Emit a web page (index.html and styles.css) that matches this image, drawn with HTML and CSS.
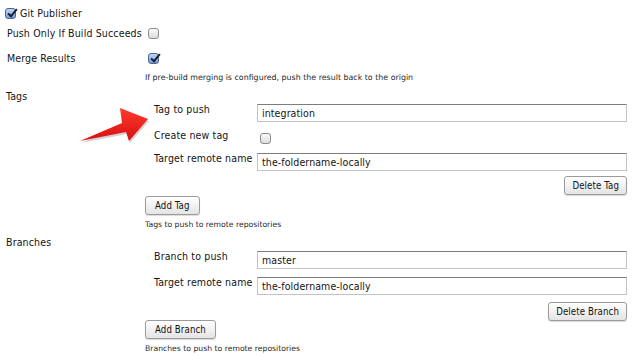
FILE: index.html
```html
<!DOCTYPE html>
<html lang="en">

<head>
    <meta charset="UTF-8">
    <meta name="viewport" content="width=device-width, initial-scale=1.0">
    <title>Git Publisher</title>

    <link rel="stylesheet" href="styles.css">
</head>

<body>
    <div class="publisher">
        <div class="head">
            <span class="check checked"></span>
            <span>Git Publisher</span>
        </div>

        <div class="row row-push">
            <div class="label">Push Only If Build Succeeds</div>
            <div class="field"><span class="check"></span></div>
        </div>

        <div class="row row-merge">
            <div class="label">Merge Results</div>
            <div class="field"><span class="check checked"></span></div>
        </div>
        <div class="help help-merge">If pre-build merging is configured, push the result back to the origin</div>

        <div class="section">Tags</div>
        <div class="repeated">
            <div class="entry">
                <div class="sub sub-first">
                    <div class="sub-label">Tag to push</div>
                    <input class="text" type="text" value="integration">
                </div>
                <div class="sub sub-check">
                    <div class="sub-label">Create new tag</div>
                    <div class="sub-field"><span class="check"></span></div>
                </div>
                <div class="sub sub-after-check">
                    <div class="sub-label">Target remote name</div>
                    <input class="text" type="text" value="the-foldername-locally">
                </div>
                <div class="actions"><button class="btn">Delete Tag</button></div>
            </div>
            <button class="btn btn-add">Add Tag</button>
            <div class="help">Tags to push to remote repositories</div>
        </div>

        <div class="section section-branches">Branches</div>
        <div class="repeated">
            <div class="entry">
                <div class="sub sub-first sub-branch">
                    <div class="sub-label">Branch to push</div>
                    <input class="text" type="text" value="master">
                </div>
                <div class="sub sub-next">
                    <div class="sub-label">Target remote name</div>
                    <input class="text" type="text" value="the-foldername-locally">
                </div>
                <div class="actions actions-branch"><button class="btn">Delete Branch</button></div>
            </div>
            <button class="btn btn-add btn-add-branch">Add Branch</button>
            <div class="help">Branches to push to remote repositories</div>
        </div>
    </div>

    <svg class="arrow" viewBox="0 0 632 355">
        <defs>
            <linearGradient id="red" x1="0" y1="0" x2="0" y2="1">
                <stop offset="0" stop-color="#ff3b30" />
                <stop offset="1" stop-color="#d80f0f" />
            </linearGradient>
        </defs>
        <polygon points="80,141 122,123 120,108 148,119 129,141 126,132" fill="rgba(0,0,0,0.18)" transform="translate(1,2)" />
        <polygon points="80,141 122,123 120,108 148,119 129,141 126,132" fill="url(#red)" />
    </svg>
</body>

</html>
```

FILE: styles.css
```css
* {
    --text: rgb(20, 20, 20);
    --help: rgb(40, 40, 40);
    box-sizing: border-box;
}

body {
    background-color: white;
    color: var(--text);
    font-family: "DejaVu Sans Condensed", "DejaVu Sans", sans-serif;
    font-size: 10.5px;
    letter-spacing: 0.15px;
    margin: 0;
    overflow: hidden;
    position: relative;
    height: 355px;
}

.publisher {
    padding: 4px 0 0 5px;
    white-space: nowrap;
}

.head {
    align-items: center;
    display: flex;
    gap: 4px;
    height: 18px;
}

.row {
    align-items: center;
    display: grid;
    grid-template-columns: 140px 1fr;
    padding-left: 2px;
    height: 16px;
}

.row-push {
    margin-top: 3px;
}

.row-merge {
    margin-top: 9px;
}

.field {
    display: flex;
    padding-left: 1px;
}

.help {
    color: var(--help);
    font-family: "DejaVu Sans", sans-serif;
    font-size: 7.7px;
    letter-spacing: 0;
    line-height: 10px;
    margin-top: 5px;
}

.help-merge {
    font-size: 7.9px;
    margin-left: 140px;
    margin-top: 7px;
}

.section {
    margin-top: 6px;
    padding-left: 1px;
    height: 14px;
    line-height: 14px;
}

.section-branches {
    margin-top: 5px;
}

.repeated {
    margin-left: 140px;
}

.entry {
    padding-left: 9px;
}

.sub {
    align-items: start;
    display: grid;
    grid-template-columns: 103px 370px;
}

.sub-first {
    margin-top: 1px;
}

.sub-branch {
    margin-top: 2px;
}

.sub-next {
    margin-top: 8px;
}

.sub-check {
    margin-top: 8px;
    height: 13px;
}

.sub-after-check {
    margin-top: 10px;
}

.sub-label {
    line-height: 11px;
}

.sub-field {
    display: flex;
    padding-left: 3px;
    padding-top: 3px;
}

.text {
    background: white;
    border: 1px solid rgb(195, 195, 195);
    border-top-color: rgb(125, 125, 125);
    color: var(--text);
    font-family: inherit;
    font-size: 10.5px;
    height: 18px;
    letter-spacing: 0.1px;
    margin: 0;
    padding: 0 4px;
    width: 370px;
}

.actions {
    display: flex;
    justify-content: flex-end;
    margin-top: 5px;
    width: 473px;
}

.actions-branch {
    margin-top: 7px;
}

.btn {
    background: linear-gradient(to bottom, rgb(255, 255, 255), rgb(228, 228, 228));
    border: 1px solid rgb(155, 155, 155);
    border-radius: 3px;
    box-shadow: 0 1px 1px rgba(0, 0, 0, 0.15);
    color: var(--text);
    display: block;
    font-family: inherit;
    font-size: 9.6px;
    height: 19px;
    letter-spacing: 0.1px;
    padding: 0 7px;
}

.btn-add {
    margin-top: 1px;
    padding: 0 9px;
}

.btn-add-branch {
    margin-top: -1px;
}

.check {
    background: linear-gradient(to bottom, rgb(250, 250, 250), rgb(220, 220, 220));
    border: 1px solid rgb(140, 140, 140);
    border-radius: 3px;
    display: inline-block;
    height: 11px;
    position: relative;
    width: 11px;
}

.check.checked {
    background: linear-gradient(to bottom, rgb(190, 215, 245), rgb(110, 160, 225));
    border-color: rgb(80, 100, 140);
}

.check.checked::after {
    border-bottom: 2px solid rgb(25, 30, 45);
    border-right: 2px solid rgb(25, 30, 45);
    content: "";
    height: 8px;
    left: 4px;
    position: absolute;
    top: -2px;
    transform: rotate(40deg);
    width: 3px;
}

.arrow {
    height: 355px;
    left: 0;
    pointer-events: none;
    position: absolute;
    top: 0;
    width: 632px;
}
```
